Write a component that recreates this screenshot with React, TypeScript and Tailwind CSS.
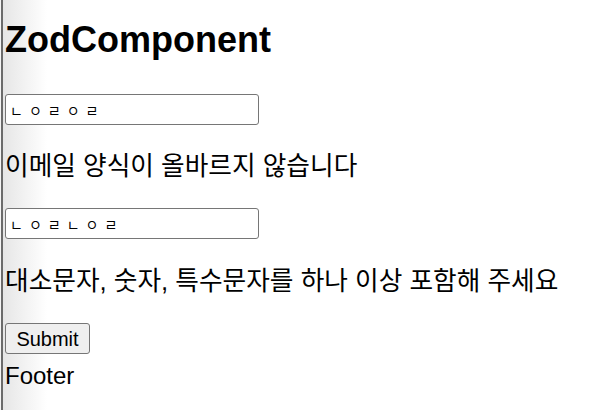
import React, { useState } from 'react';

const FIELD = "block w-[254px] h-[31px] border border-[#767676] rounded-[3px] bg-white pl-[4px] text-[14px] tracking-[6px] text-black outline-none";

const App: React.FC = () => {
    const [email, setEmail] = useState('ㄴㅇㄹㅇㄹ');
    const [password, setPassword] = useState('ㄴㅇㄹㄴㅇㄹ');

    return (
        <div className="flex min-h-[410px] bg-white text-black font-['Liberation_Sans','Noto_Sans_CJK_KR',sans-serif]">
            {/* window edge */}
            <div className="w-[1px] bg-[#f4f4f4]" />
            <div className="w-[2px] bg-[#6b6b6b]" />
            <div className="flex-1 pl-[2px] bg-[linear-gradient(to_right,#e6e6e6,#ffffff_44px)]">
                <section className="flex flex-col items-start">
                    <h1 className="mt-[20px] text-[36px] leading-[40px] font-bold">ZodComponent</h1>

                    <input
                        className={`mt-[34px] ${FIELD}`}
                        value={email}
                        onChange={e => setEmail(e.target.value)}
                    />
                    <p className="mt-[25px] text-[25.7px] leading-[32px]">이메일 양식이 올바르지 않습니다</p>

                    <input
                        className={`mt-[26px] ${FIELD}`}
                        value={password}
                        onChange={e => setPassword(e.target.value)}
                    />
                    <p className="mt-[26px] text-[25.7px] leading-[32px]">대소문자, 숫자, 특수문자를 하나 이상 포함해 주세요</p>

                    <button className="mt-[26px] w-[85px] h-[31px] border border-[#767676] rounded-[3px] bg-[#efefef] text-[20px] leading-[24px] text-black">
                        Submit
                    </button>
                </section>
                <footer className="mt-[8px] text-[24px] leading-[28px]">Footer</footer>
            </div>
        </div>
    );
};

export default App;
